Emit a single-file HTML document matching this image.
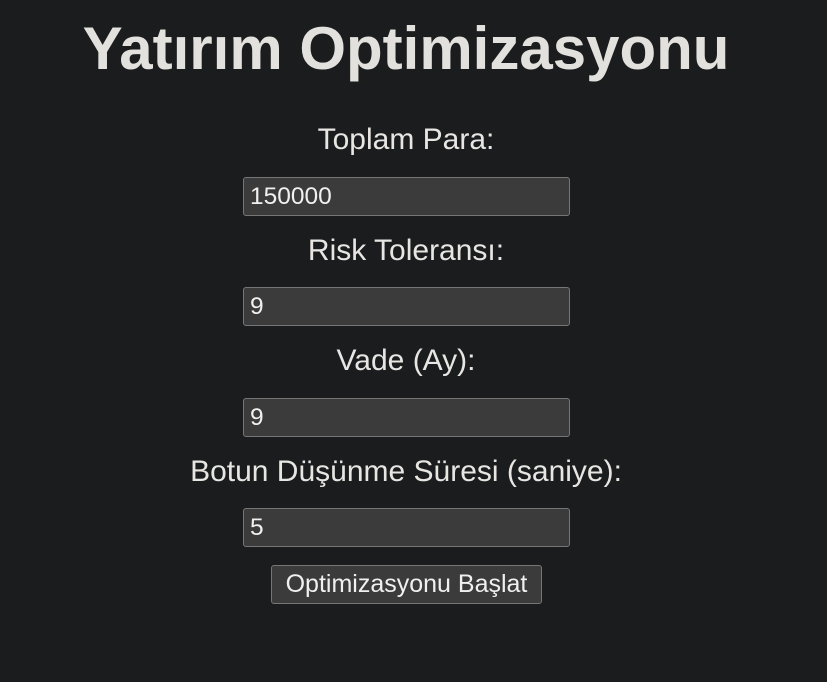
<!DOCTYPE html>
<html><head><meta charset="utf-8"><style>
html,body{margin:0;width:827px;height:682px;background:#1b1c1e;overflow:hidden;font-family:"Liberation Sans",Arial,sans-serif;color:#e8e6e3}
.c{position:absolute;left:0;width:812px;text-align:center;white-space:nowrap}
h1{margin:0;font-size:60px;font-weight:bold;top:14px;color:#e3e1dd}
.l{font-size:30px;line-height:32px}
.i{position:absolute;left:243px;height:37px;background:#3b3b3b;border:1px solid #767676;border-radius:3px;box-sizing:content-box;font-size:24.5px;line-height:37px;padding-left:6px;width:319px;color:#f0f0f0}
.b{position:absolute;left:271px;top:565px;width:269px;height:37px;background:#3b3b3b;border:1px solid #767676;border-radius:3px;font-size:25px;line-height:37px;text-align:center;color:#f0f0f0}
</style></head><body>
<h1 class="c">Yatırım Optimizasyonu</h1>
<div class="c l" style="top:124px">Toplam Para:</div>
<div class="i" style="top:177px">150000</div>
<div class="c l" style="top:235px">Risk Toleransı:</div>
<div class="i" style="top:287px">9</div>
<div class="c l" style="top:345px">Vade (Ay):</div>
<div class="i" style="top:398px">9</div>
<div class="c l" style="top:456px">Botun Düşünme Süresi (saniye):</div>
<div class="i" style="top:508px">5</div>
<div class="b">Optimizasyonu Başlat</div>
</body></html>
